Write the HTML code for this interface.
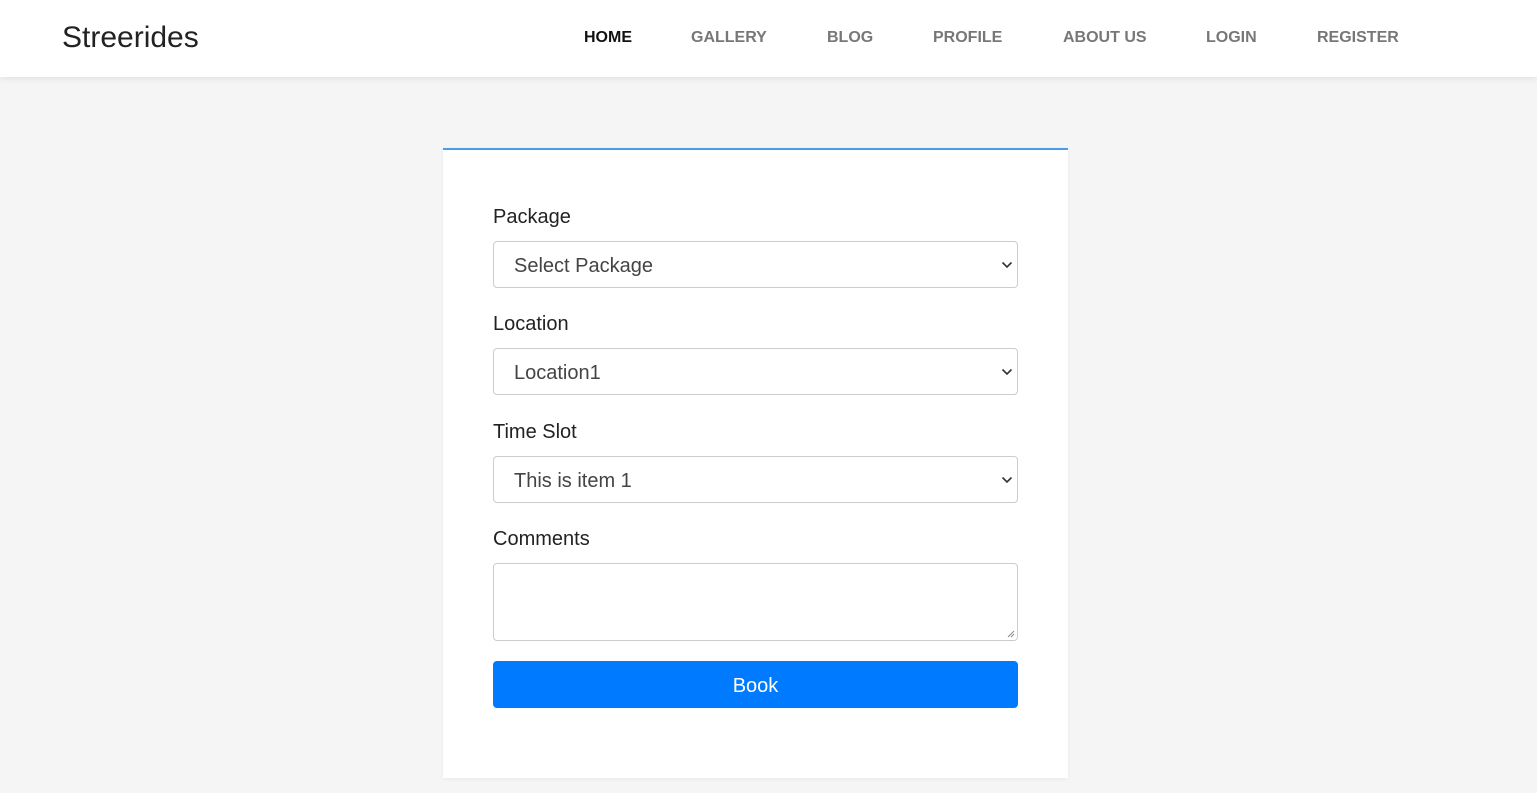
<!DOCTYPE html>
<html><head><style>
*{box-sizing:border-box;margin:0;padding:0}
body{width:1537px;height:793px;background:#f5f5f5;font-family:"Liberation Sans",sans-serif;overflow:hidden;position:relative}
.nav{position:absolute;left:0;top:0;width:1537px;height:77px;background:#fff;box-shadow:0 2px 6px rgba(0,0,0,.08)}
.brand{position:absolute;left:62px;top:21px;font-size:30px;color:#222}
.nav a{position:absolute;top:29px;font-size:16px;font-weight:bold;color:#777;text-decoration:none}
.card{position:absolute;left:443px;top:148px;width:625px;height:630px;background:#fff;border-top:2px solid #4a9de8;box-shadow:0 1px 4px rgba(0,0,0,.05)}
label{position:absolute;left:50px;font-size:20px;color:#222}
.sel{position:absolute;left:50px;width:525px;height:47px;border:1px solid #ccc;border-radius:4px;font-size:20px;color:#444;padding:13px 20px 0}
.sel svg{position:absolute;right:4px;top:19px}
.btn{position:absolute;left:50px;top:511px;width:525px;height:47px;background:#007bff;border-radius:4px;color:#fff;font-size:20px;text-align:center;line-height:50px}
</style></head><body>
<div class="nav"><div class="brand">Streerides</div>
<a style="left:584px;color:#111">HOME</a><a style="left:691px">GALLERY</a><a style="left:827px">BLOG</a><a style="left:933px">PROFILE</a><a style="left:1063px">ABOUT US</a><a style="left:1206px">LOGIN</a><a style="left:1317px">REGISTER</a></div>
<div class="card">
<label style="top:56px">Package</label>
<div class="sel" style="top:91px">Select Package<svg width="12" height="8"><path d="M1.5 1.5l4.5 4.5 4.5-4.5" stroke="#333" stroke-width="1.6" fill="none"/></svg></div>
<label style="top:163px">Location</label>
<div class="sel" style="top:198px">Location1<svg width="12" height="8"><path d="M1.5 1.5l4.5 4.5 4.5-4.5" stroke="#333" stroke-width="1.6" fill="none"/></svg></div>
<label style="top:271px">Time Slot</label>
<div class="sel" style="top:306px">This is item 1<svg width="12" height="8"><path d="M1.5 1.5l4.5 4.5 4.5-4.5" stroke="#333" stroke-width="1.6" fill="none"/></svg></div>
<label style="top:378px">Comments</label>
<div class="sel" style="top:413px;height:78px"><svg width="8" height="8" style="top:66px;right:2px"><path d="M1 7L7 1M4 7L7 4" stroke="#888" stroke-width="1" fill="none"/></svg></div>
<div class="btn">Book</div>
</div>
</body></html>
